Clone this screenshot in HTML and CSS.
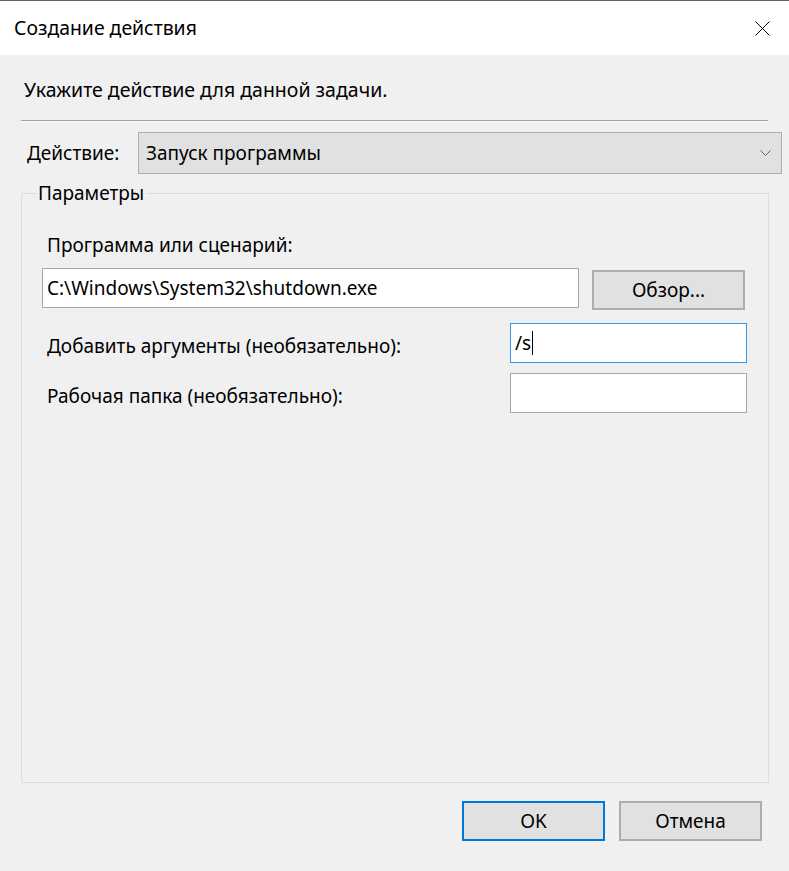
FILE: index.html
```html
<!DOCTYPE html>
<html lang="ru">
<head>
<meta charset="utf-8">
<title>Создание действия</title>
<link rel="stylesheet" href="styles.css">
</head>
<body>
<div class="window">
  <div class="titlebar">
    <span class="title">Создание действия</span>
    <svg class="close" width="15" height="15" viewBox="0 0 15 15"><path d="M0.5 0.5 L14.5 14.5 M14.5 0.5 L0.5 14.5" stroke="#000" stroke-width="1" fill="none"/></svg>
  </div>
  <div class="content">
    <div class="prompt">Укажите действие для данной задачи.</div>
    <div class="separator"></div>
    <div class="action-row">
      <span class="action-label">Действие:</span>
      <div class="select">
        <span class="select-text">Запуск программы</span>
        <svg class="chevron" width="11" height="6" viewBox="0 0 11 6"><path d="M0.5 0.5 L5.5 5.5 L10.5 0.5" stroke="#606060" stroke-width="1" fill="none"/></svg>
      </div>
    </div>
    <fieldset class="group">
      <legend class="legend">Параметры</legend>
      <div class="field-label">Программа или сценарий:</div>
      <div class="program-row">
        <div class="textbox wide">C:\Windows\System32\shutdown.exe</div>
        <div class="button browse">Обзор...</div>
      </div>
      <div class="arg-row">
        <span class="row-label">Добавить аргументы (необязательно):</span>
        <div class="textbox short focused">/s<span class="caret"></span></div>
      </div>
      <div class="arg-row">
        <span class="row-label">Рабочая папка (необязательно):</span>
        <div class="textbox short"></div>
      </div>
    </fieldset>
    <div class="buttons">
      <div class="button ok">OK</div>
      <div class="button cancel">Отмена</div>
    </div>
  </div>
</div>
</body>
</html>
```
FILE: styles.css
```css
html, body {
  margin: 0;
  padding: 0;
  background: #f0f0f0;
}
.window {
  width: 789px;
  height: 871px;
  box-sizing: border-box;
  border-top: 1px solid #5f5f5f;
  background: #f0f0f0;
  font-family: "Noto Sans", "Open Sans", sans-serif;
  font-size: 19px;
  color: #000;
  overflow: hidden;
}
.titlebar {
  height: 54px;
  background: #fff;
  display: flex;
  align-items: center;
  padding-left: 14px;
}
.title {
  font-size: 19.4px;
  line-height: 24px;
}
.close {
  margin-left: auto;
  margin-right: 19px;
  display: block;
}
.content {
  display: flex;
  flex-direction: column;
}
.prompt {
  margin-top: 23px;
  padding-left: 24px;
  font-size: 19.5px;
  line-height: 24px;
}
.separator {
  margin-top: 18px;
  margin-left: 21px;
  width: 747px;
  height: 0;
  border-top: 1px solid #a0a0a0;
  border-bottom: 1px solid #ffffff;
}
.action-row {
  margin-top: 10px;
  display: flex;
  align-items: center;
  height: 42px;
}
.action-label {
  width: 111px;
  padding-left: 27px;
  box-sizing: content-box;
  line-height: 24px;
}
.select {
  width: 644px;
  height: 42px;
  box-sizing: border-box;
  background: #e1e1e1;
  border: 1px solid #adadad;
  display: flex;
  align-items: center;
  padding-left: 7px;
}
.select-text {
  line-height: 24px;
}
.chevron {
  margin-left: auto;
  margin-right: 10px;
  display: block;
}
.group {
  margin: 7px 0 0 21px;
  padding: 0;
  width: 748px;
  height: 602px;
  box-sizing: border-box;
  border: 1px solid #dcdcdc;
  min-width: 0;
}
.legend {
  margin-left: 14px;
  padding: 0 2px;
  line-height: 24px;
}
.field-label {
  margin-top: 28px;
  padding-left: 25px;
  line-height: 24px;
}
.program-row {
  margin-top: 11px;
  display: flex;
  align-items: flex-start;
  padding-left: 20px;
}
.textbox {
  height: 40px;
  box-sizing: border-box;
  background: #fff;
  border: 1px solid #a8a8a8;
  padding-left: 4px;
  display: flex;
  align-items: center;
  line-height: 24px;
  white-space: nowrap;
}
.wide {
  width: 537px;
}
.short {
  width: 237px;
}
.focused {
  border-color: #3c96e6;
}
.caret {
  display: inline-block;
  width: 1px;
  height: 24px;
  background: #000;
  margin-left: 1px;
}
.button {
  height: 40px;
  box-sizing: border-box;
  background: #e1e1e1;
  border: 2px solid #adadad;
  display: flex;
  align-items: center;
  justify-content: center;
  line-height: 24px;
}
.browse {
  width: 153px;
  margin-left: 13px;
  margin-top: 2px;
}
.arg-row {
  margin-top: 13px;
  display: flex;
  justify-content: space-between;
  align-items: flex-start;
  padding: 0 21px 0 25px;
}
.arg-row + .arg-row {
  margin-top: 10px;
}
.row-label {
  margin-top: 11px;
  line-height: 24px;
}
.buttons {
  margin-top: 18px;
  display: flex;
  padding-left: 462px;
  gap: 14px;
}
.ok, .cancel {
  width: 143px;
}
.ok {
  border-color: #0078d7;
}
```
